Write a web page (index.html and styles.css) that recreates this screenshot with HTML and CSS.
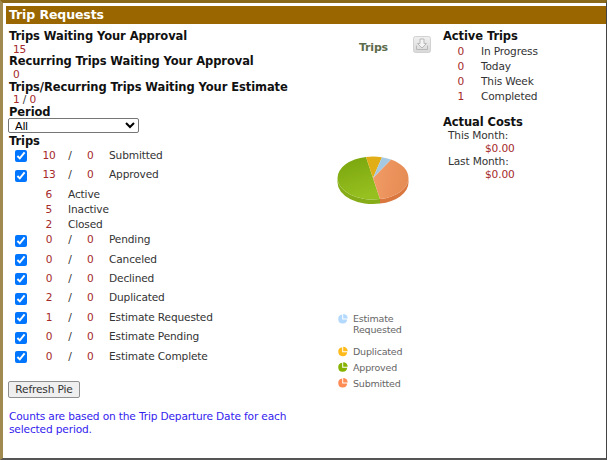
FILE: index.html
```html
<!DOCTYPE html>
<html lang="en">
<head>
  <meta charset="UTF-8" />
  <title>Trip Requests</title>
  <link rel="stylesheet" href="styles.css">
</head>
<body>
  <div class="panel">
    <div class="panel-title">Trip Requests</div>
    <div class="panel-body">
      <!-- Counts and filters -->
      <div class="col-left">
        <h4>Trips Waiting Your Approval</h4>
        <div class="count">15</div>
        <h4>Recurring Trips Waiting Your Approval</h4>
        <div class="count">0</div>
        <h4>Trips/Recurring Trips Waiting Your Estimate</h4>
        <div class="count">1 <span class="sep">/</span> 0</div>
        <h4>Period</h4>
        <select class="period"><option>All</option></select>
        <h4>Trips</h4>
        <div class="status-list">
          <label class="status"><input type="checkbox" checked><span class="a">10</span><span class="sep">/</span><span class="b">0</span><span>Submitted</span></label>
          <label class="status"><input type="checkbox" checked><span class="a">13</span><span class="sep">/</span><span class="b">0</span><span>Approved</span></label>
          <div class="sub-list">
            <div class="sub"><span class="a">6</span><span>Active</span></div>
            <div class="sub"><span class="a">5</span><span>Inactive</span></div>
            <div class="sub"><span class="a">2</span><span>Closed</span></div>
          </div>
          <label class="status"><input type="checkbox" checked><span class="a">0</span><span class="sep">/</span><span class="b">0</span><span>Pending</span></label>
          <label class="status"><input type="checkbox" checked><span class="a">0</span><span class="sep">/</span><span class="b">0</span><span>Canceled</span></label>
          <label class="status"><input type="checkbox" checked><span class="a">0</span><span class="sep">/</span><span class="b">0</span><span>Declined</span></label>
          <label class="status"><input type="checkbox" checked><span class="a">2</span><span class="sep">/</span><span class="b">0</span><span>Duplicated</span></label>
          <label class="status"><input type="checkbox" checked><span class="a">1</span><span class="sep">/</span><span class="b">0</span><span>Estimate Requested</span></label>
          <label class="status"><input type="checkbox" checked><span class="a">0</span><span class="sep">/</span><span class="b">0</span><span>Estimate Pending</span></label>
          <label class="status"><input type="checkbox" checked><span class="a">0</span><span class="sep">/</span><span class="b">0</span><span>Estimate Complete</span></label>
        </div>
        <button class="refresh">Refresh Pie</button>
        <p class="note">Counts are based on the Trip Departure Date for each selected period.</p>
      </div>

      <!-- Pie chart -->
      <div class="col-chart">
        <svg class="chart" width="115" height="385" viewBox="0 0 115 385">
          <defs>
            <linearGradient id="green" x1="0" y1="0" x2="0.3" y2="1">
              <stop offset="0" stop-color="#78a30c"/><stop offset="1" stop-color="#96c020"/>
            </linearGradient>
            <linearGradient id="orange" x1="0" y1="0" x2="1" y2="0.2">
              <stop offset="0" stop-color="#f39c66"/><stop offset="1" stop-color="#e68c55"/>
            </linearGradient>
            <linearGradient id="btn" x1="0" y1="0" x2="0" y2="1">
              <stop offset="0" stop-color="#f0f0f0"/><stop offset="1" stop-color="#d8d8d8"/>
            </linearGradient>
            <g id="slice">
              <path d="M-.5-4.500A4.500 4.500 0 1 0 4.500 .5H-.5z"/>
              <path d="M.5-5A4.500 4.500 0 0 1 5-.5H.5z"/>
            </g>
          </defs>
          <text class="chart-title" x="31" y="21">Trips</text>
          <!-- export button -->
          <rect x="85.500" y="6.500" width="17" height="16" rx="2" fill="url(#btn)" stroke="#d2d2d2"/>
          <path d="M92 9h4v4.500h2.500L94 18l-4.500-4.500H92z" fill="#f4f4f4" stroke="#b8b8b8"/>
          <path d="M88.500 15.500v4h11v-4" fill="none" stroke="#b8b8b8"/>
          <!-- pie: side walls first, then top slices -->
          <path d="M9.500 148v4.500A35.500 21.500 0 0 0 52 173.600V169.100A35.500 21.500 0 0 1 9.500 148z" fill="#86ad18"/>
          <path d="M52 169.100v4.500A35.500 21.500 0 0 0 80.500 152.500V148A35.500 21.500 0 0 1 52 169.100z" fill="#d9773f"/>
          <path d="M45 148 52 169.100A35.500 21.500 0 0 1 9.500 148 35.500 21.500 0 0 1 38 126.900z" fill="url(#green)"/>
          <path d="M45 148 63 129.500A35.500 21.500 0 0 1 80.500 148 35.500 21.500 0 0 1 52 169.100z" fill="url(#orange)"/>
          <path d="M45 148 38 126.900A35.500 21.500 0 0 1 54 127.200z" fill="#e1ae17"/>
          <path d="M45 148 54 127.200A35.500 21.500 0 0 1 63 129.500z" fill="#a6c9e3"/>
          <!-- legend -->
          <g class="legend">
            <use href="#slice" x="14.700" y="289" fill="#b3d9ff"/>
            <text x="25" y="291.500">Estimate</text>
            <text x="25" y="302.500">Requested</text>
            <use href="#slice" x="14.700" y="321.700" fill="#ffbb1c"/>
            <text x="25" y="325">Duplicated</text>
            <use href="#slice" x="14.700" y="337.300" fill="#86b300"/>
            <text x="25" y="341">Approved</text>
            <use href="#slice" x="14.700" y="353" fill="#ff8c55"/>
            <text x="25" y="356.500">Submitted</text>
          </g>
        </svg>
      </div>

      <!-- Active trips and costs -->
      <div class="col-right">
        <h4>Active Trips</h4>
        <div class="sub"><span class="a">0</span><span>In Progress</span></div>
        <div class="sub"><span class="a">0</span><span>Today</span></div>
        <div class="sub"><span class="a">0</span><span>This Week</span></div>
        <div class="sub"><span class="a">1</span><span>Completed</span></div>
        <h4 class="costs-head">Actual Costs</h4>
        <div class="cost-label">This Month:</div>
        <div class="cost-value">$0.00</div>
        <div class="cost-label">Last Month:</div>
        <div class="cost-value">$0.00</div>
      </div>
    </div>
  </div>
</body>
</html>
```

FILE: styles.css
```css
/* Global Styles */
body {
  margin: 0;
  font-family: "DejaVu Sans", Verdana, sans-serif;
  font-size: 10.600px;
  letter-spacing: -0.150px;
  color: #333333;
  background-color: #ffffff;
}
h4 {
  margin: 0;
  font-size: 11.500px;
  letter-spacing: -0.080px;
  line-height: 12.700px;
  font-weight: bold;
  color: #111111;
}
/* Panel */
.panel {
  box-sizing: border-box;
  height: 460px;
  padding: 3px 0 0 3px;
  border-top: 3px solid #8a6a1a;
  border-left: 3px solid #a08a50;
  border-right: 1px solid #444444;
  border-bottom: 2px solid #555555;
}
.panel-title {
  height: 18px;
  line-height: 18px;
  padding-left: 3px;
  background-color: #996600;
  color: #ffffff;
  font-size: 12.500px;
  letter-spacing: -0.100px;
  font-weight: bold;
}
.panel-body {
  display: flex;
  padding: 6px 0 0 3px;
}
/* Left column */
.col-left {
  width: 322px;
  flex: none;
}
.count {
  height: 12.700px;
  line-height: 12.700px;
  padding-left: 4px;
  color: #a52a2a;
}
.sep {
  color: #333333;
}
.period {
  display: block;
  width: 131px;
  height: 15px;
  padding: 0 0 0 2px;
  margin: -1px 0 2px -1px;
  font-family: "Liberation Sans", Arial, sans-serif;
  font-size: 11.500px;
  background-color: #ffffff;
  border: 1px solid #767676;
  border-radius: 2px;
}
.status-list {
  margin-top: -2.400px;
}
.status {
  display: flex;
  align-items: center;
  height: 19.400px;
  padding-left: 6px;
}
.status input {
  width: 12px;
  height: 12px;
  margin: 3px 0 0;
  accent-color: #0075ff;
}
.status .a {
  width: 36px;
  margin-left: 4px;
  text-align: center;
  color: #a52a2a;
}
.status .sep {
  width: 6px;
  text-align: center;
}
.status .b {
  width: 10px;
  margin-left: 14px;
  color: #a52a2a;
}
.status span:last-child {
  margin-left: 12px;
}
.sub-list {
  margin: 3px 0 -2.500px;
}
.sub {
  display: flex;
  height: 15px;
  line-height: 15px;
}
.sub .a {
  width: 43px;
  text-align: right;
  color: #a52a2a;
}
.sub span:last-child {
  margin-left: 16px;
}
.refresh {
  display: block;
  margin: 15.500px 0 0 -1px;
  width: 72px;
  height: 17px;
  padding: 0;
  font-family: "DejaVu Sans", Verdana, sans-serif;
  font-size: 10.600px;
  letter-spacing: -0.150px;
  color: #333333;
  background-color: #efefef;
  border: 1px solid #8f8f8f;
  border-radius: 2px;
}
.note {
  margin: 12px 0 0;
  width: 290px;
  line-height: 13px;
  color: #3322ee;
}
/* Chart column */
.col-chart {
  width: 112px;
  flex: none;
}
.chart {
  display: block;
  margin-left: -3px;
}
.chart-title {
  font-size: 11px;
  font-weight: bold;
  letter-spacing: -0.200px;
  fill: #5c6b4a;
}
.legend text {
  font-size: 9.500px;
  letter-spacing: -0.200px;
  fill: #666666;
}
/* Right column */
.col-right {
  flex: 1;
}
.col-right h4 {
  margin-bottom: 1px;
}
.col-right .sub .a {
  width: 21px;
}
.col-right .sub span:last-child {
  margin-left: 17px;
}
.col-right .costs-head {
  margin-top: 12px;
}
.cost-label {
  height: 13px;
  line-height: 13px;
  padding-left: 5px;
}
.cost-value {
  height: 13px;
  line-height: 13px;
  padding-left: 42px;
  color: #a52a2a;
}
```
